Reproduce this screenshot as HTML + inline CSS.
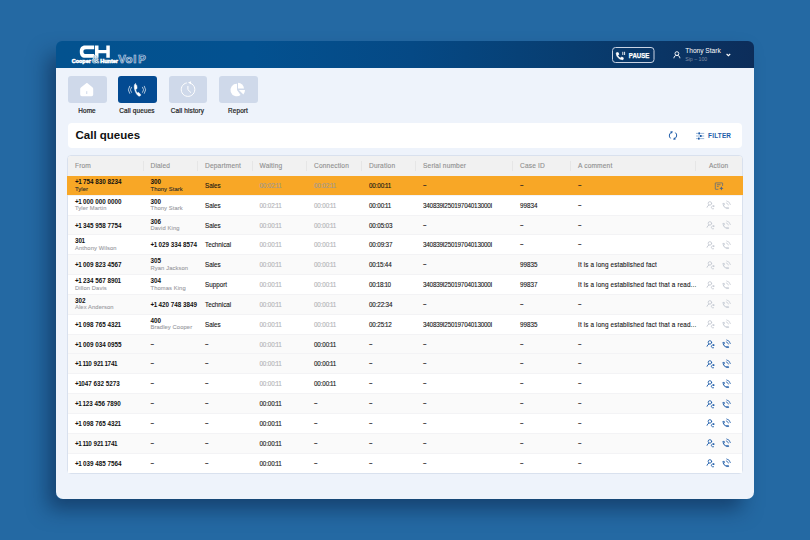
<!DOCTYPE html>
<html><head><meta charset="utf-8">
<style>
*{margin:0;padding:0;box-sizing:border-box}
html,body{width:810px;height:540px;overflow:hidden}
body{background:#2469a3;font-family:"Liberation Sans",sans-serif;position:relative;color:#111}
.card{position:absolute;left:56px;top:41px;width:698px;height:458px;border-radius:6px;box-shadow:-10px 12px 20px -2px rgba(5,25,60,.5)}
.body{position:absolute;left:0;top:20px;width:698px;height:438px;border-radius:0 0 7px 7px;background:#eef3fb}
.hdr{position:absolute;left:0;top:0;width:698px;height:27px;border-radius:6px 6px 0 0;background:linear-gradient(90deg,#03528f 0%,#035190 28%,#054985 51%,#083d70 74%,#0c2d5a 100%)}
.abs{position:absolute}
.tile{position:absolute;top:76px;width:38.5px;height:27px;border-radius:3px;background:#cfd9ea}
.tile.act{background:#034a92}
.tile svg{position:absolute;left:0;top:0}
.lbl{position:absolute;top:107px;font-size:6.4px;line-height:8px;color:#1a1a1a;-webkit-text-stroke:.2px #1a1a1a;letter-spacing:.15px;text-align:center;width:60px}
.titlebar{position:absolute;left:68px;top:123px;width:674px;height:25px;background:#fff;border-radius:4px}
.title{position:absolute;left:75.5px;top:127.5px;font-size:11.5px;line-height:14px;font-weight:bold;color:#111}
.tbl{position:absolute;left:67px;top:155px;width:676px;height:318.5px;background:#fff;border-radius:4px;border:1px solid #d9e1ee}
.thead{position:absolute;left:68px;top:156px;width:674px;height:19.5px;background:#f1f1f1;border-radius:3px 3px 0 0}
.th{position:absolute;top:161.5px;font-size:6.6px;line-height:8px;color:#8e8e8e;white-space:nowrap;letter-spacing:.16px;-webkit-text-stroke:.1px #8e8e8e}
.sep{position:absolute;top:161px;width:1px;height:10px;background:#e6e6e6}
.row{position:absolute;left:68px;width:674px}
.row.or{left:67px;width:676px}
.rl{position:absolute;left:68px;width:674px;height:1px;background:#f3f3f5}
.t{position:absolute;font-size:6.3px;line-height:7px;white-space:nowrap;color:#151515;-webkit-text-stroke:.1px currentColor}
.t.b{font-weight:bold;color:#111;-webkit-text-stroke:0}
.t.s{color:#9a9a9f;font-size:5.8px;letter-spacing:.1px}
.t.s.o{color:#2a2a2a}
.t.g{color:#b2b2b6}
.t.g.o{color:#a09a92}
.t.d{letter-spacing:-.15px}
.t.dash{font-weight:bold;color:#222;-webkit-text-stroke:0}
.o1{font-style:normal;margin-left:-.5px;letter-spacing:-.4px}
.t.sn{letter-spacing:-.2px}
.t.cm{letter-spacing:.16px}
.ic{position:absolute}
</style></head>
<body>
<div class="card"><div class="body"></div><div class="hdr"></div></div>
<svg class="abs" style="left:0;top:0" width="810" height="70" viewBox="0 0 810 70">
  <path d="M94.2 45.6H85.2C81.6 45.6 79.8 47.8 79.8 51.7S81.6 57.8 85.2 57.8H94.2V54.1H86C84.3 54.1 83.4 53.3 83.4 51.7S84.3 49.3 86 49.3H94.2Z" fill="#fff"/><path d="M95 45.6h3.5v4.5h7.8v-4.5h3.5v12.2h-3.5v-4.5h-7.8v4.5h-3.5z" fill="#fff"/>
  <text x="71.8" y="63.1" font-family="Liberation Sans" font-weight="bold" font-size="5.6" fill="#fff" stroke="#fff" stroke-width=".55" textLength="19" lengthAdjust="spacingAndGlyphs">Cooper</text>
  <text x="91.7" y="63.2" font-family="Liberation Sans" font-weight="bold" font-size="11.5" fill="#03528f" stroke="#fff" stroke-width="0.7" textLength="7.2" lengthAdjust="spacingAndGlyphs">&amp;</text>
  <text x="100.2" y="63.1" font-family="Liberation Sans" font-weight="bold" font-size="5.6" fill="#fff" stroke="#fff" stroke-width=".55" textLength="17.8" lengthAdjust="spacingAndGlyphs">Hunter</text>
  <text x="118.2 125.4 133.2 138.2" y="63" font-family="Liberation Sans" font-weight="bold" font-size="11.4" fill="none" stroke="#cdd8ea" stroke-width="0.7">VoIP</text>
  <!-- pause button -->
  <rect x="612.5" y="47.5" width="41.5" height="15" rx="3" fill="none" stroke="#c9d3e3" stroke-width="1"/>
  <path transform="translate(615.2 51.6) scale(.38)" d="M6.62 10.79c1.44 2.83 3.76 5.14 6.59 6.59l2.2-2.2c.27-.27.67-.36 1.02-.24 1.12.37 2.33.57 3.57.57.55 0 1 .45 1 1V20c0 .55-.45 1-1 1-9.39 0-17-7.61-17-17 0-.55.45-1 1-1h3.5c.55 0 1 .45 1 1 0 1.25.2 2.45.57 3.57.11.35.03.74-.25 1.02l-2.2 2.2z" fill="#fff" stroke="#fff" stroke-width="2.4" stroke-linejoin="round"/>
  <path d="M622.8 51.8v3.2M624.6 51.8v3.2" stroke="#fff" stroke-width=".9"/>
  <text x="628.8" y="57.6" font-family="Liberation Sans" font-weight="bold" font-size="6.6" fill="#fff" stroke="#fff" stroke-width=".25" textLength="20.6" lengthAdjust="spacingAndGlyphs">PAUSE</text>
  <!-- user -->
  <g fill="none" stroke="#fff" stroke-width="0.9"><circle cx="676.9" cy="53.6" r="1.9"/><path d="M673.9 58.3c0-2 1.3-2.9 3-2.9s3 .9 3 2.9"/></g>
  <text x="685.2" y="52.8" font-family="Liberation Sans" font-size="6.5" fill="#fff" textLength="35.6" lengthAdjust="spacingAndGlyphs">Thony Stark</text>
  <text x="685.2" y="60.5" font-family="Liberation Sans" font-size="5.6" fill="#7f8ca3" textLength="22" lengthAdjust="spacingAndGlyphs">Sip – 100</text>
  <path d="M726.6 54l1.8 1.7 1.8-1.7" fill="none" stroke="#fff" stroke-width="1.1"/>
</svg>
<div class="tile" style="left:68px"><svg width="39" height="27" viewBox="0 0 39 27"><path d="M13.2 11.2L18.6 7.1Q18.9 6.9 19.2 7.1L24.4 11.2Q25.2 11.8 25.2 12.8V18.6Q25.2 20.2 23.6 20.2H13.8Q12.2 20.2 12.2 18.6V12.8Q12.2 11.8 13.2 11.2Z" fill="#fff"/><path d="M18.75 15.2v2.8" stroke="#cfd9ea" stroke-width="1"/></svg></div>
<div class="tile act" style="left:118px"><svg width="39" height="27" viewBox="0 0 39 27"><path d="M17.6 7.4c-1.6.8-1.8 3.6-.6 7.2s3.2 5.9 4.7 5.5l.9-.6c.3-.3.3-.7 0-1l-1.6-1.8c-.3-.3-.7-.3-1-.1l-.8.5c-.7-.9-1.4-2.6-1.6-3.8l.9-.3c.4-.1.6-.5.6-.9l-.3-2.4c0-.5-.4-.8-.9-.7z" fill="#fff" stroke="#fff" stroke-width=".5"/><g fill="none" stroke="#fff" stroke-width=".8" stroke-linecap="round" opacity=".85"><path d="M13.4 11.2a4 4 0 0 0 0 5.2"/><path d="M11.6 10.2a6 6 0 0 0 0 7.2"/><path d="M24.6 11.2a4 4 0 0 1 0 5.2"/><path d="M26.4 10.2a6 6 0 0 1 0 7.2"/></g></svg></div>
<div class="tile" style="left:168.5px"><svg width="39" height="27" viewBox="0 0 39 27"><g transform="translate(-.6 0)"><path d="M18.4 6.9A6.8 6.8 0 1 0 22.2 7.3" fill="none" stroke="#fff" stroke-width="1"/><path d="M19.6 6.6l3.1-1.3-.2 3z" fill="#fff"/><path d="M19.5 10v3.7l3.1 3" fill="none" stroke="#fff" stroke-width="1"/></g></svg></div>
<div class="tile" style="left:219px"><svg width="39" height="27" viewBox="0 0 39 27"><path d="M18 14.1V7.7A6.3 6.3 0 1 0 21.6 19z" fill="#fff"/><path d="M19 6.8A6.2 6.2 0 0 1 25 12.6H19z" fill="#fff"/><path d="M19.9 14H26a6.6 6.6 0 0 1-1.6 4.5z" fill="#fff"/></svg></div>
<div class="lbl" style="left:57px">Home</div>
<div class="lbl" style="left:107px">Call queues</div>
<div class="lbl" style="left:157.5px">Call history</div>
<div class="lbl" style="left:208px">Report</div>
<div class="titlebar"></div>
<div class="title">Call queues</div>
<svg class="abs" style="left:660px;top:125px" width="80" height="20" viewBox="660 125 80 20">
  <g fill="none" stroke="#1d5ba8" stroke-width="1">
    <path d="M671.6 132.2A3.7 3.7 0 0 0 670.6 138.4"/>
    <path d="M674.4 138.8A3.7 3.7 0 0 0 675.4 132.6"/>
  </g>
  <path d="M670.2 131.6l2.6-.3-.9 2.4z" fill="#1d5ba8"/>
  <path d="M675.8 139.4l-2.6.3.9-2.4z" fill="#1d5ba8"/>
  <g stroke="#1d5ba8" stroke-width=".8" fill="none">
    <path d="M696 133.4h8.2M696 136h8.2M696 138.6h8.2" opacity=".55"/>
  </g>
  <g fill="#1d5ba8"><rect x="698.4" y="132.4" width="1.6" height="2" /><rect x="700" y="135" width="1.6" height="2"/><rect x="698" y="137.6" width="1.6" height="2"/></g>
  <text x="708.1" y="137.9" font-family="Liberation Sans" font-weight="bold" font-size="6.4" fill="#1d5ba8" style="letter-spacing:.2px">FILTER</text>
</svg>
<div class="tbl"></div>
<div class="thead"></div>
<div class="th" style="left:75px">From</div>
<div class="th" style="left:150.5px">Dialed</div>
<div class="th" style="left:205px">Department</div>
<div class="th" style="left:259.5px">Waiting</div>
<div class="th" style="left:314px">Connection</div>
<div class="th" style="left:369px">Duration</div>
<div class="th" style="left:423px">Serial number</div>
<div class="th" style="left:520px">Case ID</div>
<div class="th" style="left:578px">A comment</div>
<div class="th" style="left:709px">Action</div>
<div class="sep" style="left:142.5px"></div>
<div class="sep" style="left:197px"></div>
<div class="sep" style="left:251.5px"></div>
<div class="sep" style="left:306px"></div>
<div class="sep" style="left:360.5px"></div>
<div class="sep" style="left:415.3px"></div>
<div class="sep" style="left:512.3px"></div>
<div class="sep" style="left:570.4px"></div>
<div class="sep" style="left:695.2px"></div>
<div class="row or" style="top:175.50px;height:19.83px;background:#f8a726"></div>
<div class="t b o" style="left:75px;top:178.32px">+<i class="o1">1</i> 754 830 8234</div><div class="t s o" style="left:75px;top:185.90px">Tyler</div>
<div class="t b o" style="left:150.5px;top:178.32px">300</div><div class="t s o" style="left:150.5px;top:185.90px">Thony Stark</div>
<div class="t n" style="left:205px;top:182.32px">Sales</div>
<div class="t g d o" style="left:259.5px;top:182.32px">00:02:<i class="o1">1</i><i class="o1">1</i></div>
<div class="t g d o" style="left:314px;top:182.32px">00:02:<i class="o1">1</i><i class="o1">1</i></div>
<div class="t n d o" style="left:369px;top:182.32px">00:00:<i class="o1">1</i><i class="o1">1</i></div>
<div class="t dash" style="left:423px;top:181.32px">–</div>
<div class="t dash" style="left:520px;top:181.32px">–</div>
<div class="t dash" style="left:578px;top:181.32px">–</div>
<svg class="ic" style="top:175.50px;left:700px" width="40" height="20" viewBox="0 0 40 20"><g fill="none" stroke="#4a6488" stroke-width=".7"><path d="M18.4 13.3H15.6Q15.3 13.3 15.3 13V7.2Q15.3 6.9 15.6 6.9H22.3Q22.6 6.9 22.6 7.2V9.9"/><path d="M16.9 8.7h3.6M16.9 10.4h1.8"/></g><path d="M21.4 10.2Q21.7 12 23.5 12.3Q21.7 12.6 21.4 14.4Q21.1 12.6 19.3 12.3Q21.1 12 21.4 10.2Z" fill="#4a6488"/></svg>
<div class="row" style="top:195.33px;height:19.83px;background:#ffffff"></div>
<div class="rl" style="top:194.83px"></div>
<div class="t b" style="left:75px;top:198.32px">+<i class="o1">1</i> 000 000 0000</div><div class="t s" style="left:75px;top:204.90px">Tyler Martin</div>
<div class="t b" style="left:150.5px;top:198.32px">300</div><div class="t s" style="left:150.5px;top:204.90px">Thony Stark</div>
<div class="t n" style="left:205px;top:202.32px">Sales</div>
<div class="t g d" style="left:259.5px;top:202.32px">00:02:<i class="o1">1</i><i class="o1">1</i></div>
<div class="t g d" style="left:314px;top:202.32px">00:00:<i class="o1">1</i><i class="o1">1</i></div>
<div class="t n d" style="left:369px;top:202.32px">00:00:<i class="o1">1</i><i class="o1">1</i></div>
<div class="t n sn" style="left:423px;top:202.32px">340839I25019704013000I</div>
<div class="t n" style="left:520px;top:202.32px">99834</div>
<div class="t dash" style="left:578px;top:201.32px">–</div>
<svg class="ic" style="top:195.33px;left:700px" width="40" height="20" viewBox="0 0 40 20"><g fill="none" stroke="#c5cad3" stroke-width=".9" stroke-linecap="round"><circle cx="9.9" cy="8.4" r="1.75"/><path d="M7 12.3Q7.4 10.6 8.9 10.1"/><path d="M13.7 11.1A1.55 1.55 0 1 0 13.6 13.8"/></g><circle cx="13.7" cy="11.1" r=".85" fill="#c5cad3"/><g fill="none" stroke="#c5cad3" stroke-width=".9" stroke-linecap="round" stroke-linejoin="round"></g><path transform="translate(21.6 6.9) scale(.34)" d="M6.54 5c.06.89.21 1.76.45 2.59l-1.2 1.2c-.41-1.2-.67-2.47-.76-3.79h1.51m9.86 12.02c.85.24 1.72.39 2.6.45v1.49c-1.32-.09-2.59-.35-3.8-.75l1.2-1.19M7.5 3H4c-.55 0-1 .45-1 1 0 9.390 7.61 17 17 17 .55 0 1-.45 1-1v-3.49c0-.55-.45-1-1-1-1.24 0-2.450-.2-3.570-.57-.1-.04-.21-.05-.31-.05-.26 0-.51.1-.71.29l-2.2 2.2c-2.83-1.45-5.15-3.76-6.59-6.59l2.2-2.2c.28-.28.36-.67.25-1.02C8.7 6.45 8.5 5.25 8.5 4c0-.55-.45-1-1-1z" fill="#c5cad3" stroke="#c5cad3" stroke-width=".3"/><g fill="none" stroke="#c5cad3" stroke-width=".8" stroke-linecap="round"><path d="M26.3 7.9A2.8 2.8 0 0 1 28.4 10"/><path d="M26.7 5.9A4.6 4.6 0 0 1 30.4 9.6"/></g></svg>
<div class="row" style="top:215.16px;height:19.83px;background:#fafafa"></div>
<div class="rl" style="top:214.66px"></div>
<div class="t b" style="left:75px;top:222.32px">+<i class="o1">1</i> 345 958 7754</div>
<div class="t b" style="left:150.5px;top:218.32px">306</div><div class="t s" style="left:150.5px;top:224.90px">David King</div>
<div class="t n" style="left:205px;top:222.32px">Sales</div>
<div class="t g d" style="left:259.5px;top:222.32px">00:00:<i class="o1">1</i><i class="o1">1</i></div>
<div class="t g d" style="left:314px;top:222.32px">00:00:<i class="o1">1</i><i class="o1">1</i></div>
<div class="t n d" style="left:369px;top:222.32px">00:05:03</div>
<div class="t dash" style="left:423px;top:221.32px">–</div>
<div class="t dash" style="left:520px;top:221.32px">–</div>
<div class="t dash" style="left:578px;top:221.32px">–</div>
<svg class="ic" style="top:215.16px;left:700px" width="40" height="20" viewBox="0 0 40 20"><g fill="none" stroke="#c5cad3" stroke-width=".9" stroke-linecap="round"><circle cx="9.9" cy="8.4" r="1.75"/><path d="M7 12.3Q7.4 10.6 8.9 10.1"/><path d="M13.7 11.1A1.55 1.55 0 1 0 13.6 13.8"/></g><circle cx="13.7" cy="11.1" r=".85" fill="#c5cad3"/><g fill="none" stroke="#c5cad3" stroke-width=".9" stroke-linecap="round" stroke-linejoin="round"></g><path transform="translate(21.6 6.9) scale(.34)" d="M6.54 5c.06.89.21 1.76.45 2.59l-1.2 1.2c-.41-1.2-.67-2.47-.76-3.79h1.51m9.86 12.02c.85.24 1.72.39 2.6.45v1.49c-1.32-.09-2.59-.35-3.8-.75l1.2-1.19M7.5 3H4c-.55 0-1 .45-1 1 0 9.390 7.61 17 17 17 .55 0 1-.45 1-1v-3.49c0-.55-.45-1-1-1-1.24 0-2.450-.2-3.570-.57-.1-.04-.21-.05-.31-.05-.26 0-.51.1-.71.29l-2.2 2.2c-2.83-1.45-5.15-3.76-6.59-6.59l2.2-2.2c.28-.28.36-.67.25-1.02C8.7 6.45 8.5 5.25 8.5 4c0-.55-.45-1-1-1z" fill="#c5cad3" stroke="#c5cad3" stroke-width=".3"/><g fill="none" stroke="#c5cad3" stroke-width=".8" stroke-linecap="round"><path d="M26.3 7.9A2.8 2.8 0 0 1 28.4 10"/><path d="M26.7 5.9A4.6 4.6 0 0 1 30.4 9.6"/></g></svg>
<div class="row" style="top:234.99px;height:19.83px;background:#ffffff"></div>
<div class="rl" style="top:234.49px"></div>
<div class="t b" style="left:75px;top:237.32px">30<i class="o1">1</i></div><div class="t s" style="left:75px;top:244.90px">Anthony Wilson</div>
<div class="t b" style="left:150.5px;top:241.32px">+<i class="o1">1</i> 029 334 8574</div>
<div class="t n" style="left:205px;top:241.32px">Technical</div>
<div class="t g d" style="left:259.5px;top:241.32px">00:00:<i class="o1">1</i><i class="o1">1</i></div>
<div class="t g d" style="left:314px;top:241.32px">00:00:<i class="o1">1</i><i class="o1">1</i></div>
<div class="t n d" style="left:369px;top:241.32px">00:09:37</div>
<div class="t n sn" style="left:423px;top:241.32px">340839I25019704013000I</div>
<div class="t dash" style="left:520px;top:240.32px">–</div>
<div class="t dash" style="left:578px;top:240.32px">–</div>
<svg class="ic" style="top:234.99px;left:700px" width="40" height="20" viewBox="0 0 40 20"><g fill="none" stroke="#c5cad3" stroke-width=".9" stroke-linecap="round"><circle cx="9.9" cy="8.4" r="1.75"/><path d="M7 12.3Q7.4 10.6 8.9 10.1"/><path d="M13.7 11.1A1.55 1.55 0 1 0 13.6 13.8"/></g><circle cx="13.7" cy="11.1" r=".85" fill="#c5cad3"/><g fill="none" stroke="#c5cad3" stroke-width=".9" stroke-linecap="round" stroke-linejoin="round"></g><path transform="translate(21.6 6.9) scale(.34)" d="M6.54 5c.06.89.21 1.76.45 2.59l-1.2 1.2c-.41-1.2-.67-2.47-.76-3.79h1.51m9.86 12.02c.85.24 1.72.39 2.6.45v1.49c-1.32-.09-2.59-.35-3.8-.75l1.2-1.19M7.5 3H4c-.55 0-1 .45-1 1 0 9.390 7.61 17 17 17 .55 0 1-.45 1-1v-3.49c0-.55-.45-1-1-1-1.24 0-2.450-.2-3.570-.57-.1-.04-.21-.05-.31-.05-.26 0-.51.1-.71.29l-2.2 2.2c-2.83-1.45-5.15-3.76-6.59-6.59l2.2-2.2c.28-.28.36-.67.25-1.02C8.7 6.45 8.5 5.25 8.5 4c0-.55-.45-1-1-1z" fill="#c5cad3" stroke="#c5cad3" stroke-width=".3"/><g fill="none" stroke="#c5cad3" stroke-width=".8" stroke-linecap="round"><path d="M26.3 7.9A2.8 2.8 0 0 1 28.4 10"/><path d="M26.7 5.9A4.6 4.6 0 0 1 30.4 9.6"/></g></svg>
<div class="row" style="top:254.82px;height:19.83px;background:#fafafa"></div>
<div class="rl" style="top:254.32px"></div>
<div class="t b" style="left:75px;top:261.32px">+<i class="o1">1</i> 009 823 4567</div>
<div class="t b" style="left:150.5px;top:257.32px">305</div><div class="t s" style="left:150.5px;top:264.90px">Ryan Jackson</div>
<div class="t n" style="left:205px;top:261.32px">Sales</div>
<div class="t g d" style="left:259.5px;top:261.32px">00:00:<i class="o1">1</i><i class="o1">1</i></div>
<div class="t g d" style="left:314px;top:261.32px">00:00:<i class="o1">1</i><i class="o1">1</i></div>
<div class="t n d" style="left:369px;top:261.32px">00:<i class="o1">1</i>5:44</div>
<div class="t dash" style="left:423px;top:260.32px">–</div>
<div class="t n" style="left:520px;top:261.32px">99835</div>
<div class="t n cm" style="left:578px;top:261.32px">It is a long established fact</div>
<svg class="ic" style="top:254.82px;left:700px" width="40" height="20" viewBox="0 0 40 20"><g fill="none" stroke="#c5cad3" stroke-width=".9" stroke-linecap="round"><circle cx="9.9" cy="8.4" r="1.75"/><path d="M7 12.3Q7.4 10.6 8.9 10.1"/><path d="M13.7 11.1A1.55 1.55 0 1 0 13.6 13.8"/></g><circle cx="13.7" cy="11.1" r=".85" fill="#c5cad3"/><g fill="none" stroke="#c5cad3" stroke-width=".9" stroke-linecap="round" stroke-linejoin="round"></g><path transform="translate(21.6 6.9) scale(.34)" d="M6.54 5c.06.89.21 1.76.45 2.59l-1.2 1.2c-.41-1.2-.67-2.47-.76-3.79h1.51m9.86 12.02c.85.24 1.72.39 2.6.45v1.49c-1.32-.09-2.59-.35-3.8-.75l1.2-1.19M7.5 3H4c-.55 0-1 .45-1 1 0 9.390 7.61 17 17 17 .55 0 1-.45 1-1v-3.49c0-.55-.45-1-1-1-1.24 0-2.450-.2-3.570-.57-.1-.04-.21-.05-.31-.05-.26 0-.51.1-.71.29l-2.2 2.2c-2.83-1.45-5.15-3.76-6.59-6.59l2.2-2.2c.28-.28.36-.67.25-1.02C8.7 6.45 8.5 5.25 8.5 4c0-.55-.45-1-1-1z" fill="#c5cad3" stroke="#c5cad3" stroke-width=".3"/><g fill="none" stroke="#c5cad3" stroke-width=".8" stroke-linecap="round"><path d="M26.3 7.9A2.8 2.8 0 0 1 28.4 10"/><path d="M26.7 5.9A4.6 4.6 0 0 1 30.4 9.6"/></g></svg>
<div class="row" style="top:274.65px;height:19.83px;background:#ffffff"></div>
<div class="rl" style="top:274.15px"></div>
<div class="t b" style="left:75px;top:277.32px">+<i class="o1">1</i> 234 567 890<i class="o1">1</i></div><div class="t s" style="left:75px;top:284.90px">Dillon Davis</div>
<div class="t b" style="left:150.5px;top:277.32px">304</div><div class="t s" style="left:150.5px;top:284.90px">Thomas King</div>
<div class="t n" style="left:205px;top:281.32px">Support</div>
<div class="t g d" style="left:259.5px;top:281.32px">00:00:<i class="o1">1</i><i class="o1">1</i></div>
<div class="t g d" style="left:314px;top:281.32px">00:00:<i class="o1">1</i><i class="o1">1</i></div>
<div class="t n d" style="left:369px;top:281.32px">00:<i class="o1">1</i>8:<i class="o1">1</i>0</div>
<div class="t n sn" style="left:423px;top:281.32px">340839I25019704013000I</div>
<div class="t n" style="left:520px;top:281.32px">99837</div>
<div class="t n cm" style="left:578px;top:281.32px">It is a long established fact that a read...</div>
<svg class="ic" style="top:274.65px;left:700px" width="40" height="20" viewBox="0 0 40 20"><g fill="none" stroke="#c5cad3" stroke-width=".9" stroke-linecap="round"><circle cx="9.9" cy="8.4" r="1.75"/><path d="M7 12.3Q7.4 10.6 8.9 10.1"/><path d="M13.7 11.1A1.55 1.55 0 1 0 13.6 13.8"/></g><circle cx="13.7" cy="11.1" r=".85" fill="#c5cad3"/><g fill="none" stroke="#c5cad3" stroke-width=".9" stroke-linecap="round" stroke-linejoin="round"></g><path transform="translate(21.6 6.9) scale(.34)" d="M6.54 5c.06.89.21 1.76.45 2.59l-1.2 1.2c-.41-1.2-.67-2.47-.76-3.79h1.51m9.86 12.02c.85.24 1.72.39 2.6.45v1.49c-1.32-.09-2.59-.35-3.8-.75l1.2-1.19M7.5 3H4c-.55 0-1 .45-1 1 0 9.390 7.61 17 17 17 .55 0 1-.45 1-1v-3.49c0-.55-.45-1-1-1-1.24 0-2.450-.2-3.570-.57-.1-.04-.21-.05-.31-.05-.26 0-.51.1-.71.29l-2.2 2.2c-2.83-1.45-5.15-3.76-6.59-6.59l2.2-2.2c.28-.28.36-.67.25-1.02C8.7 6.45 8.5 5.25 8.5 4c0-.55-.45-1-1-1z" fill="#c5cad3" stroke="#c5cad3" stroke-width=".3"/><g fill="none" stroke="#c5cad3" stroke-width=".8" stroke-linecap="round"><path d="M26.3 7.9A2.8 2.8 0 0 1 28.4 10"/><path d="M26.7 5.9A4.6 4.6 0 0 1 30.4 9.6"/></g></svg>
<div class="row" style="top:294.48px;height:19.83px;background:#fafafa"></div>
<div class="rl" style="top:293.98px"></div>
<div class="t b" style="left:75px;top:297.32px">302</div><div class="t s" style="left:75px;top:303.90px">Alex Anderson</div>
<div class="t b" style="left:150.5px;top:301.32px">+<i class="o1">1</i> 420 748 3849</div>
<div class="t n" style="left:205px;top:301.32px">Technical</div>
<div class="t g d" style="left:259.5px;top:301.32px">00:00:<i class="o1">1</i><i class="o1">1</i></div>
<div class="t g d" style="left:314px;top:301.32px">00:00:<i class="o1">1</i><i class="o1">1</i></div>
<div class="t n d" style="left:369px;top:301.32px">00:22:34</div>
<div class="t dash" style="left:423px;top:300.32px">–</div>
<div class="t dash" style="left:520px;top:300.32px">–</div>
<div class="t dash" style="left:578px;top:300.32px">–</div>
<svg class="ic" style="top:294.48px;left:700px" width="40" height="20" viewBox="0 0 40 20"><g fill="none" stroke="#c5cad3" stroke-width=".9" stroke-linecap="round"><circle cx="9.9" cy="8.4" r="1.75"/><path d="M7 12.3Q7.4 10.6 8.9 10.1"/><path d="M13.7 11.1A1.55 1.55 0 1 0 13.6 13.8"/></g><circle cx="13.7" cy="11.1" r=".85" fill="#c5cad3"/><g fill="none" stroke="#c5cad3" stroke-width=".9" stroke-linecap="round" stroke-linejoin="round"></g><path transform="translate(21.6 6.9) scale(.34)" d="M6.54 5c.06.89.21 1.76.45 2.59l-1.2 1.2c-.41-1.2-.67-2.47-.76-3.79h1.51m9.86 12.02c.85.24 1.72.39 2.6.45v1.49c-1.32-.09-2.59-.35-3.8-.75l1.2-1.19M7.5 3H4c-.55 0-1 .45-1 1 0 9.390 7.61 17 17 17 .55 0 1-.45 1-1v-3.49c0-.55-.45-1-1-1-1.24 0-2.450-.2-3.570-.57-.1-.04-.21-.05-.31-.05-.26 0-.51.1-.71.29l-2.2 2.2c-2.83-1.45-5.15-3.76-6.59-6.59l2.2-2.2c.28-.28.36-.67.25-1.02C8.7 6.45 8.5 5.25 8.5 4c0-.55-.45-1-1-1z" fill="#c5cad3" stroke="#c5cad3" stroke-width=".3"/><g fill="none" stroke="#c5cad3" stroke-width=".8" stroke-linecap="round"><path d="M26.3 7.9A2.8 2.8 0 0 1 28.4 10"/><path d="M26.7 5.9A4.6 4.6 0 0 1 30.4 9.6"/></g></svg>
<div class="row" style="top:314.31px;height:19.83px;background:#ffffff"></div>
<div class="rl" style="top:313.81px"></div>
<div class="t b" style="left:75px;top:321.32px">+<i class="o1">1</i> 098 765 432<i class="o1">1</i></div>
<div class="t b" style="left:150.5px;top:317.32px">400</div><div class="t s" style="left:150.5px;top:323.90px">Bradley Cooper</div>
<div class="t n" style="left:205px;top:321.32px">Sales</div>
<div class="t g d" style="left:259.5px;top:321.32px">00:00:<i class="o1">1</i><i class="o1">1</i></div>
<div class="t g d" style="left:314px;top:321.32px">00:00:<i class="o1">1</i><i class="o1">1</i></div>
<div class="t n d" style="left:369px;top:321.32px">00:25:<i class="o1">1</i>2</div>
<div class="t n sn" style="left:423px;top:321.32px">340839I25019704013000I</div>
<div class="t n" style="left:520px;top:321.32px">99835</div>
<div class="t n cm" style="left:578px;top:321.32px">It is a long established fact that a read...</div>
<svg class="ic" style="top:314.31px;left:700px" width="40" height="20" viewBox="0 0 40 20"><g fill="none" stroke="#c5cad3" stroke-width=".9" stroke-linecap="round"><circle cx="9.9" cy="8.4" r="1.75"/><path d="M7 12.3Q7.4 10.6 8.9 10.1"/><path d="M13.7 11.1A1.55 1.55 0 1 0 13.6 13.8"/></g><circle cx="13.7" cy="11.1" r=".85" fill="#c5cad3"/><g fill="none" stroke="#c5cad3" stroke-width=".9" stroke-linecap="round" stroke-linejoin="round"></g><path transform="translate(21.6 6.9) scale(.34)" d="M6.54 5c.06.89.21 1.76.45 2.59l-1.2 1.2c-.41-1.2-.67-2.47-.76-3.79h1.51m9.86 12.02c.85.24 1.72.39 2.6.45v1.49c-1.32-.09-2.59-.35-3.8-.75l1.2-1.19M7.5 3H4c-.55 0-1 .45-1 1 0 9.390 7.61 17 17 17 .55 0 1-.45 1-1v-3.49c0-.55-.45-1-1-1-1.24 0-2.450-.2-3.570-.57-.1-.04-.21-.05-.31-.05-.26 0-.51.1-.71.29l-2.2 2.2c-2.83-1.45-5.15-3.76-6.59-6.59l2.2-2.2c.28-.28.36-.67.25-1.02C8.7 6.45 8.5 5.25 8.5 4c0-.55-.45-1-1-1z" fill="#c5cad3" stroke="#c5cad3" stroke-width=".3"/><g fill="none" stroke="#c5cad3" stroke-width=".8" stroke-linecap="round"><path d="M26.3 7.9A2.8 2.8 0 0 1 28.4 10"/><path d="M26.7 5.9A4.6 4.6 0 0 1 30.4 9.6"/></g></svg>
<div class="row" style="top:334.14px;height:19.83px;background:#fafafa"></div>
<div class="rl" style="top:333.64px"></div>
<div class="t b" style="left:75px;top:341.32px">+<i class="o1">1</i> 009 034 0955</div>
<div class="t dash" style="left:150.5px;top:340.32px">–</div>
<div class="t dash" style="left:205px;top:340.32px">–</div>
<div class="t g d" style="left:259.5px;top:341.32px">00:00:<i class="o1">1</i><i class="o1">1</i></div>
<div class="t n d" style="left:314px;top:341.32px">00:00:<i class="o1">1</i><i class="o1">1</i></div>
<div class="t dash" style="left:369px;top:340.32px">–</div>
<div class="t dash" style="left:423px;top:340.32px">–</div>
<div class="t dash" style="left:520px;top:340.32px">–</div>
<div class="t dash" style="left:578px;top:340.32px">–</div>
<svg class="ic" style="top:334.14px;left:700px" width="40" height="20" viewBox="0 0 40 20"><g fill="none" stroke="#1d5ba8" stroke-width=".9" stroke-linecap="round"><circle cx="9.9" cy="8.4" r="1.75"/><path d="M7 12.3Q7.4 10.6 8.9 10.1"/><path d="M13.7 11.1A1.55 1.55 0 1 0 13.6 13.8"/></g><circle cx="13.7" cy="11.1" r=".85" fill="#1d5ba8"/><g fill="none" stroke="#1d5ba8" stroke-width=".9" stroke-linecap="round" stroke-linejoin="round"></g><path transform="translate(21.6 6.9) scale(.34)" d="M6.54 5c.06.89.21 1.76.45 2.59l-1.2 1.2c-.41-1.2-.67-2.47-.76-3.79h1.51m9.86 12.02c.85.24 1.72.39 2.6.45v1.49c-1.32-.09-2.59-.35-3.8-.75l1.2-1.19M7.5 3H4c-.55 0-1 .45-1 1 0 9.390 7.61 17 17 17 .55 0 1-.45 1-1v-3.49c0-.55-.45-1-1-1-1.24 0-2.450-.2-3.570-.57-.1-.04-.21-.05-.31-.05-.26 0-.51.1-.71.29l-2.2 2.2c-2.83-1.45-5.15-3.76-6.59-6.59l2.2-2.2c.28-.28.36-.67.25-1.02C8.7 6.45 8.5 5.25 8.5 4c0-.55-.45-1-1-1z" fill="#1d5ba8" stroke="#1d5ba8" stroke-width=".3"/><g fill="none" stroke="#1d5ba8" stroke-width=".8" stroke-linecap="round"><path d="M26.3 7.9A2.8 2.8 0 0 1 28.4 10"/><path d="M26.7 5.9A4.6 4.6 0 0 1 30.4 9.6"/></g></svg>
<div class="row" style="top:353.97px;height:19.83px;background:#fafafa"></div>
<div class="rl" style="top:353.47px"></div>
<div class="t b" style="left:75px;top:360.32px">+<i class="o1">1</i> <i class="o1">1</i><i class="o1">1</i>0 92<i class="o1">1</i> <i class="o1">1</i>74<i class="o1">1</i></div>
<div class="t dash" style="left:150.5px;top:359.32px">–</div>
<div class="t dash" style="left:205px;top:359.32px">–</div>
<div class="t g d" style="left:259.5px;top:360.32px">00:00:<i class="o1">1</i><i class="o1">1</i></div>
<div class="t n d" style="left:314px;top:360.32px">00:00:<i class="o1">1</i><i class="o1">1</i></div>
<div class="t dash" style="left:369px;top:359.32px">–</div>
<div class="t dash" style="left:423px;top:359.32px">–</div>
<div class="t dash" style="left:520px;top:359.32px">–</div>
<div class="t dash" style="left:578px;top:359.32px">–</div>
<svg class="ic" style="top:353.97px;left:700px" width="40" height="20" viewBox="0 0 40 20"><g fill="none" stroke="#1d5ba8" stroke-width=".9" stroke-linecap="round"><circle cx="9.9" cy="8.4" r="1.75"/><path d="M7 12.3Q7.4 10.6 8.9 10.1"/><path d="M13.7 11.1A1.55 1.55 0 1 0 13.6 13.8"/></g><circle cx="13.7" cy="11.1" r=".85" fill="#1d5ba8"/><g fill="none" stroke="#1d5ba8" stroke-width=".9" stroke-linecap="round" stroke-linejoin="round"></g><path transform="translate(21.6 6.9) scale(.34)" d="M6.54 5c.06.89.21 1.76.45 2.59l-1.2 1.2c-.41-1.2-.67-2.47-.76-3.79h1.51m9.86 12.02c.85.24 1.72.39 2.6.45v1.49c-1.32-.09-2.59-.35-3.8-.75l1.2-1.19M7.5 3H4c-.55 0-1 .45-1 1 0 9.390 7.61 17 17 17 .55 0 1-.45 1-1v-3.49c0-.55-.45-1-1-1-1.24 0-2.450-.2-3.570-.57-.1-.04-.21-.05-.31-.05-.26 0-.51.1-.71.29l-2.2 2.2c-2.83-1.45-5.15-3.76-6.59-6.59l2.2-2.2c.28-.28.36-.67.25-1.02C8.7 6.45 8.5 5.25 8.5 4c0-.55-.45-1-1-1z" fill="#1d5ba8" stroke="#1d5ba8" stroke-width=".3"/><g fill="none" stroke="#1d5ba8" stroke-width=".8" stroke-linecap="round"><path d="M26.3 7.9A2.8 2.8 0 0 1 28.4 10"/><path d="M26.7 5.9A4.6 4.6 0 0 1 30.4 9.6"/></g></svg>
<div class="row" style="top:373.80px;height:19.83px;background:#ffffff"></div>
<div class="rl" style="top:373.30px"></div>
<div class="t b" style="left:75px;top:380.32px">+<i class="o1">1</i>047 632 5273</div>
<div class="t dash" style="left:150.5px;top:379.32px">–</div>
<div class="t dash" style="left:205px;top:379.32px">–</div>
<div class="t g d" style="left:259.5px;top:380.32px">00:00:<i class="o1">1</i><i class="o1">1</i></div>
<div class="t n d" style="left:314px;top:380.32px">00:00:<i class="o1">1</i><i class="o1">1</i></div>
<div class="t dash" style="left:369px;top:379.32px">–</div>
<div class="t dash" style="left:423px;top:379.32px">–</div>
<div class="t dash" style="left:520px;top:379.32px">–</div>
<div class="t dash" style="left:578px;top:379.32px">–</div>
<svg class="ic" style="top:373.80px;left:700px" width="40" height="20" viewBox="0 0 40 20"><g fill="none" stroke="#1d5ba8" stroke-width=".9" stroke-linecap="round"><circle cx="9.9" cy="8.4" r="1.75"/><path d="M7 12.3Q7.4 10.6 8.9 10.1"/><path d="M13.7 11.1A1.55 1.55 0 1 0 13.6 13.8"/></g><circle cx="13.7" cy="11.1" r=".85" fill="#1d5ba8"/><g fill="none" stroke="#1d5ba8" stroke-width=".9" stroke-linecap="round" stroke-linejoin="round"></g><path transform="translate(21.6 6.9) scale(.34)" d="M6.54 5c.06.89.21 1.76.45 2.59l-1.2 1.2c-.41-1.2-.67-2.47-.76-3.79h1.51m9.86 12.02c.85.24 1.72.39 2.6.45v1.49c-1.32-.09-2.59-.35-3.8-.75l1.2-1.19M7.5 3H4c-.55 0-1 .45-1 1 0 9.390 7.61 17 17 17 .55 0 1-.45 1-1v-3.49c0-.55-.45-1-1-1-1.24 0-2.450-.2-3.570-.57-.1-.04-.21-.05-.31-.05-.26 0-.51.1-.71.29l-2.2 2.2c-2.83-1.45-5.15-3.76-6.59-6.59l2.2-2.2c.28-.28.36-.67.25-1.02C8.7 6.45 8.5 5.25 8.5 4c0-.55-.45-1-1-1z" fill="#1d5ba8" stroke="#1d5ba8" stroke-width=".3"/><g fill="none" stroke="#1d5ba8" stroke-width=".8" stroke-linecap="round"><path d="M26.3 7.9A2.8 2.8 0 0 1 28.4 10"/><path d="M26.7 5.9A4.6 4.6 0 0 1 30.4 9.6"/></g></svg>
<div class="row" style="top:393.63px;height:19.83px;background:#fafafa"></div>
<div class="rl" style="top:393.13px"></div>
<div class="t b" style="left:75px;top:400.32px">+<i class="o1">1</i> <i class="o1">1</i>23 456 7890</div>
<div class="t dash" style="left:150.5px;top:399.32px">–</div>
<div class="t dash" style="left:205px;top:399.32px">–</div>
<div class="t n d" style="left:259.5px;top:400.32px">00:00:<i class="o1">1</i><i class="o1">1</i></div>
<div class="t dash" style="left:314px;top:399.32px">–</div>
<div class="t dash" style="left:369px;top:399.32px">–</div>
<div class="t dash" style="left:423px;top:399.32px">–</div>
<div class="t dash" style="left:520px;top:399.32px">–</div>
<div class="t dash" style="left:578px;top:399.32px">–</div>
<svg class="ic" style="top:393.63px;left:700px" width="40" height="20" viewBox="0 0 40 20"><g fill="none" stroke="#1d5ba8" stroke-width=".9" stroke-linecap="round"><circle cx="9.9" cy="8.4" r="1.75"/><path d="M7 12.3Q7.4 10.6 8.9 10.1"/><path d="M13.7 11.1A1.55 1.55 0 1 0 13.6 13.8"/></g><circle cx="13.7" cy="11.1" r=".85" fill="#1d5ba8"/><g fill="none" stroke="#1d5ba8" stroke-width=".9" stroke-linecap="round" stroke-linejoin="round"></g><path transform="translate(21.6 6.9) scale(.34)" d="M6.54 5c.06.89.21 1.76.45 2.59l-1.2 1.2c-.41-1.2-.67-2.47-.76-3.79h1.51m9.86 12.02c.85.24 1.72.39 2.6.45v1.49c-1.32-.09-2.59-.35-3.8-.75l1.2-1.19M7.5 3H4c-.55 0-1 .45-1 1 0 9.390 7.61 17 17 17 .55 0 1-.45 1-1v-3.49c0-.55-.45-1-1-1-1.24 0-2.450-.2-3.570-.57-.1-.04-.21-.05-.31-.05-.26 0-.51.1-.71.29l-2.2 2.2c-2.83-1.45-5.15-3.76-6.59-6.59l2.2-2.2c.28-.28.36-.67.25-1.02C8.7 6.45 8.5 5.25 8.5 4c0-.55-.45-1-1-1z" fill="#1d5ba8" stroke="#1d5ba8" stroke-width=".3"/><g fill="none" stroke="#1d5ba8" stroke-width=".8" stroke-linecap="round"><path d="M26.3 7.9A2.8 2.8 0 0 1 28.4 10"/><path d="M26.7 5.9A4.6 4.6 0 0 1 30.4 9.6"/></g></svg>
<div class="row" style="top:413.46px;height:19.83px;background:#ffffff"></div>
<div class="rl" style="top:412.96px"></div>
<div class="t b" style="left:75px;top:420.32px">+<i class="o1">1</i> 098 765 432<i class="o1">1</i></div>
<div class="t dash" style="left:150.5px;top:419.32px">–</div>
<div class="t dash" style="left:205px;top:419.32px">–</div>
<div class="t n d" style="left:259.5px;top:420.32px">00:00:<i class="o1">1</i><i class="o1">1</i></div>
<div class="t dash" style="left:314px;top:419.32px">–</div>
<div class="t dash" style="left:369px;top:419.32px">–</div>
<div class="t dash" style="left:423px;top:419.32px">–</div>
<div class="t dash" style="left:520px;top:419.32px">–</div>
<div class="t dash" style="left:578px;top:419.32px">–</div>
<svg class="ic" style="top:413.46px;left:700px" width="40" height="20" viewBox="0 0 40 20"><g fill="none" stroke="#1d5ba8" stroke-width=".9" stroke-linecap="round"><circle cx="9.9" cy="8.4" r="1.75"/><path d="M7 12.3Q7.4 10.6 8.9 10.1"/><path d="M13.7 11.1A1.55 1.55 0 1 0 13.6 13.8"/></g><circle cx="13.7" cy="11.1" r=".85" fill="#1d5ba8"/><g fill="none" stroke="#1d5ba8" stroke-width=".9" stroke-linecap="round" stroke-linejoin="round"></g><path transform="translate(21.6 6.9) scale(.34)" d="M6.54 5c.06.89.21 1.76.45 2.59l-1.2 1.2c-.41-1.2-.67-2.47-.76-3.79h1.51m9.86 12.02c.85.24 1.72.39 2.6.45v1.49c-1.32-.09-2.59-.35-3.8-.75l1.2-1.19M7.5 3H4c-.55 0-1 .45-1 1 0 9.390 7.61 17 17 17 .55 0 1-.45 1-1v-3.49c0-.55-.45-1-1-1-1.24 0-2.450-.2-3.570-.57-.1-.04-.21-.05-.31-.05-.26 0-.51.1-.71.29l-2.2 2.2c-2.83-1.45-5.15-3.76-6.59-6.59l2.2-2.2c.28-.28.36-.67.25-1.02C8.7 6.45 8.5 5.25 8.5 4c0-.55-.45-1-1-1z" fill="#1d5ba8" stroke="#1d5ba8" stroke-width=".3"/><g fill="none" stroke="#1d5ba8" stroke-width=".8" stroke-linecap="round"><path d="M26.3 7.9A2.8 2.8 0 0 1 28.4 10"/><path d="M26.7 5.9A4.6 4.6 0 0 1 30.4 9.6"/></g></svg>
<div class="row" style="top:433.29px;height:19.83px;background:#fafafa"></div>
<div class="rl" style="top:432.79px"></div>
<div class="t b" style="left:75px;top:440.32px">+<i class="o1">1</i> <i class="o1">1</i><i class="o1">1</i>0 92<i class="o1">1</i> <i class="o1">1</i>74<i class="o1">1</i></div>
<div class="t dash" style="left:150.5px;top:439.32px">–</div>
<div class="t dash" style="left:205px;top:439.32px">–</div>
<div class="t n d" style="left:259.5px;top:440.32px">00:00:<i class="o1">1</i><i class="o1">1</i></div>
<div class="t dash" style="left:314px;top:439.32px">–</div>
<div class="t dash" style="left:369px;top:439.32px">–</div>
<div class="t dash" style="left:423px;top:439.32px">–</div>
<div class="t dash" style="left:520px;top:439.32px">–</div>
<div class="t dash" style="left:578px;top:439.32px">–</div>
<svg class="ic" style="top:433.29px;left:700px" width="40" height="20" viewBox="0 0 40 20"><g fill="none" stroke="#1d5ba8" stroke-width=".9" stroke-linecap="round"><circle cx="9.9" cy="8.4" r="1.75"/><path d="M7 12.3Q7.4 10.6 8.9 10.1"/><path d="M13.7 11.1A1.55 1.55 0 1 0 13.6 13.8"/></g><circle cx="13.7" cy="11.1" r=".85" fill="#1d5ba8"/><g fill="none" stroke="#1d5ba8" stroke-width=".9" stroke-linecap="round" stroke-linejoin="round"></g><path transform="translate(21.6 6.9) scale(.34)" d="M6.54 5c.06.89.21 1.76.45 2.59l-1.2 1.2c-.41-1.2-.67-2.47-.76-3.79h1.51m9.86 12.02c.85.24 1.72.39 2.6.45v1.49c-1.32-.09-2.59-.35-3.8-.75l1.2-1.19M7.5 3H4c-.55 0-1 .45-1 1 0 9.390 7.61 17 17 17 .55 0 1-.45 1-1v-3.49c0-.55-.45-1-1-1-1.24 0-2.450-.2-3.570-.57-.1-.04-.21-.05-.31-.05-.26 0-.51.1-.71.29l-2.2 2.2c-2.83-1.45-5.15-3.76-6.59-6.59l2.2-2.2c.28-.28.36-.67.25-1.02C8.7 6.45 8.5 5.25 8.5 4c0-.55-.45-1-1-1z" fill="#1d5ba8" stroke="#1d5ba8" stroke-width=".3"/><g fill="none" stroke="#1d5ba8" stroke-width=".8" stroke-linecap="round"><path d="M26.3 7.9A2.8 2.8 0 0 1 28.4 10"/><path d="M26.7 5.9A4.6 4.6 0 0 1 30.4 9.6"/></g></svg>
<div class="row" style="top:453.12px;height:19.83px;background:#ffffff"></div>
<div class="rl" style="top:452.62px"></div>
<div class="t b" style="left:75px;top:460.32px">+<i class="o1">1</i> 039 485 7564</div>
<div class="t dash" style="left:150.5px;top:459.32px">–</div>
<div class="t dash" style="left:205px;top:459.32px">–</div>
<div class="t n d" style="left:259.5px;top:460.32px">00:00:<i class="o1">1</i><i class="o1">1</i></div>
<div class="t dash" style="left:314px;top:459.32px">–</div>
<div class="t dash" style="left:369px;top:459.32px">–</div>
<div class="t dash" style="left:423px;top:459.32px">–</div>
<div class="t dash" style="left:520px;top:459.32px">–</div>
<div class="t dash" style="left:578px;top:459.32px">–</div>
<svg class="ic" style="top:453.12px;left:700px" width="40" height="20" viewBox="0 0 40 20"><g fill="none" stroke="#1d5ba8" stroke-width=".9" stroke-linecap="round"><circle cx="9.9" cy="8.4" r="1.75"/><path d="M7 12.3Q7.4 10.6 8.9 10.1"/><path d="M13.7 11.1A1.55 1.55 0 1 0 13.6 13.8"/></g><circle cx="13.7" cy="11.1" r=".85" fill="#1d5ba8"/><g fill="none" stroke="#1d5ba8" stroke-width=".9" stroke-linecap="round" stroke-linejoin="round"></g><path transform="translate(21.6 6.9) scale(.34)" d="M6.54 5c.06.89.21 1.76.45 2.59l-1.2 1.2c-.41-1.2-.67-2.47-.76-3.79h1.51m9.86 12.02c.85.24 1.72.39 2.6.45v1.49c-1.32-.09-2.59-.35-3.8-.75l1.2-1.19M7.5 3H4c-.55 0-1 .45-1 1 0 9.390 7.61 17 17 17 .55 0 1-.45 1-1v-3.49c0-.55-.45-1-1-1-1.24 0-2.450-.2-3.570-.57-.1-.04-.21-.05-.31-.05-.26 0-.51.1-.71.29l-2.2 2.2c-2.83-1.45-5.15-3.76-6.59-6.59l2.2-2.2c.28-.28.36-.67.25-1.02C8.7 6.45 8.5 5.25 8.5 4c0-.55-.45-1-1-1z" fill="#1d5ba8" stroke="#1d5ba8" stroke-width=".3"/><g fill="none" stroke="#1d5ba8" stroke-width=".8" stroke-linecap="round"><path d="M26.3 7.9A2.8 2.8 0 0 1 28.4 10"/><path d="M26.7 5.9A4.6 4.6 0 0 1 30.4 9.6"/></g></svg>
</body></html>
